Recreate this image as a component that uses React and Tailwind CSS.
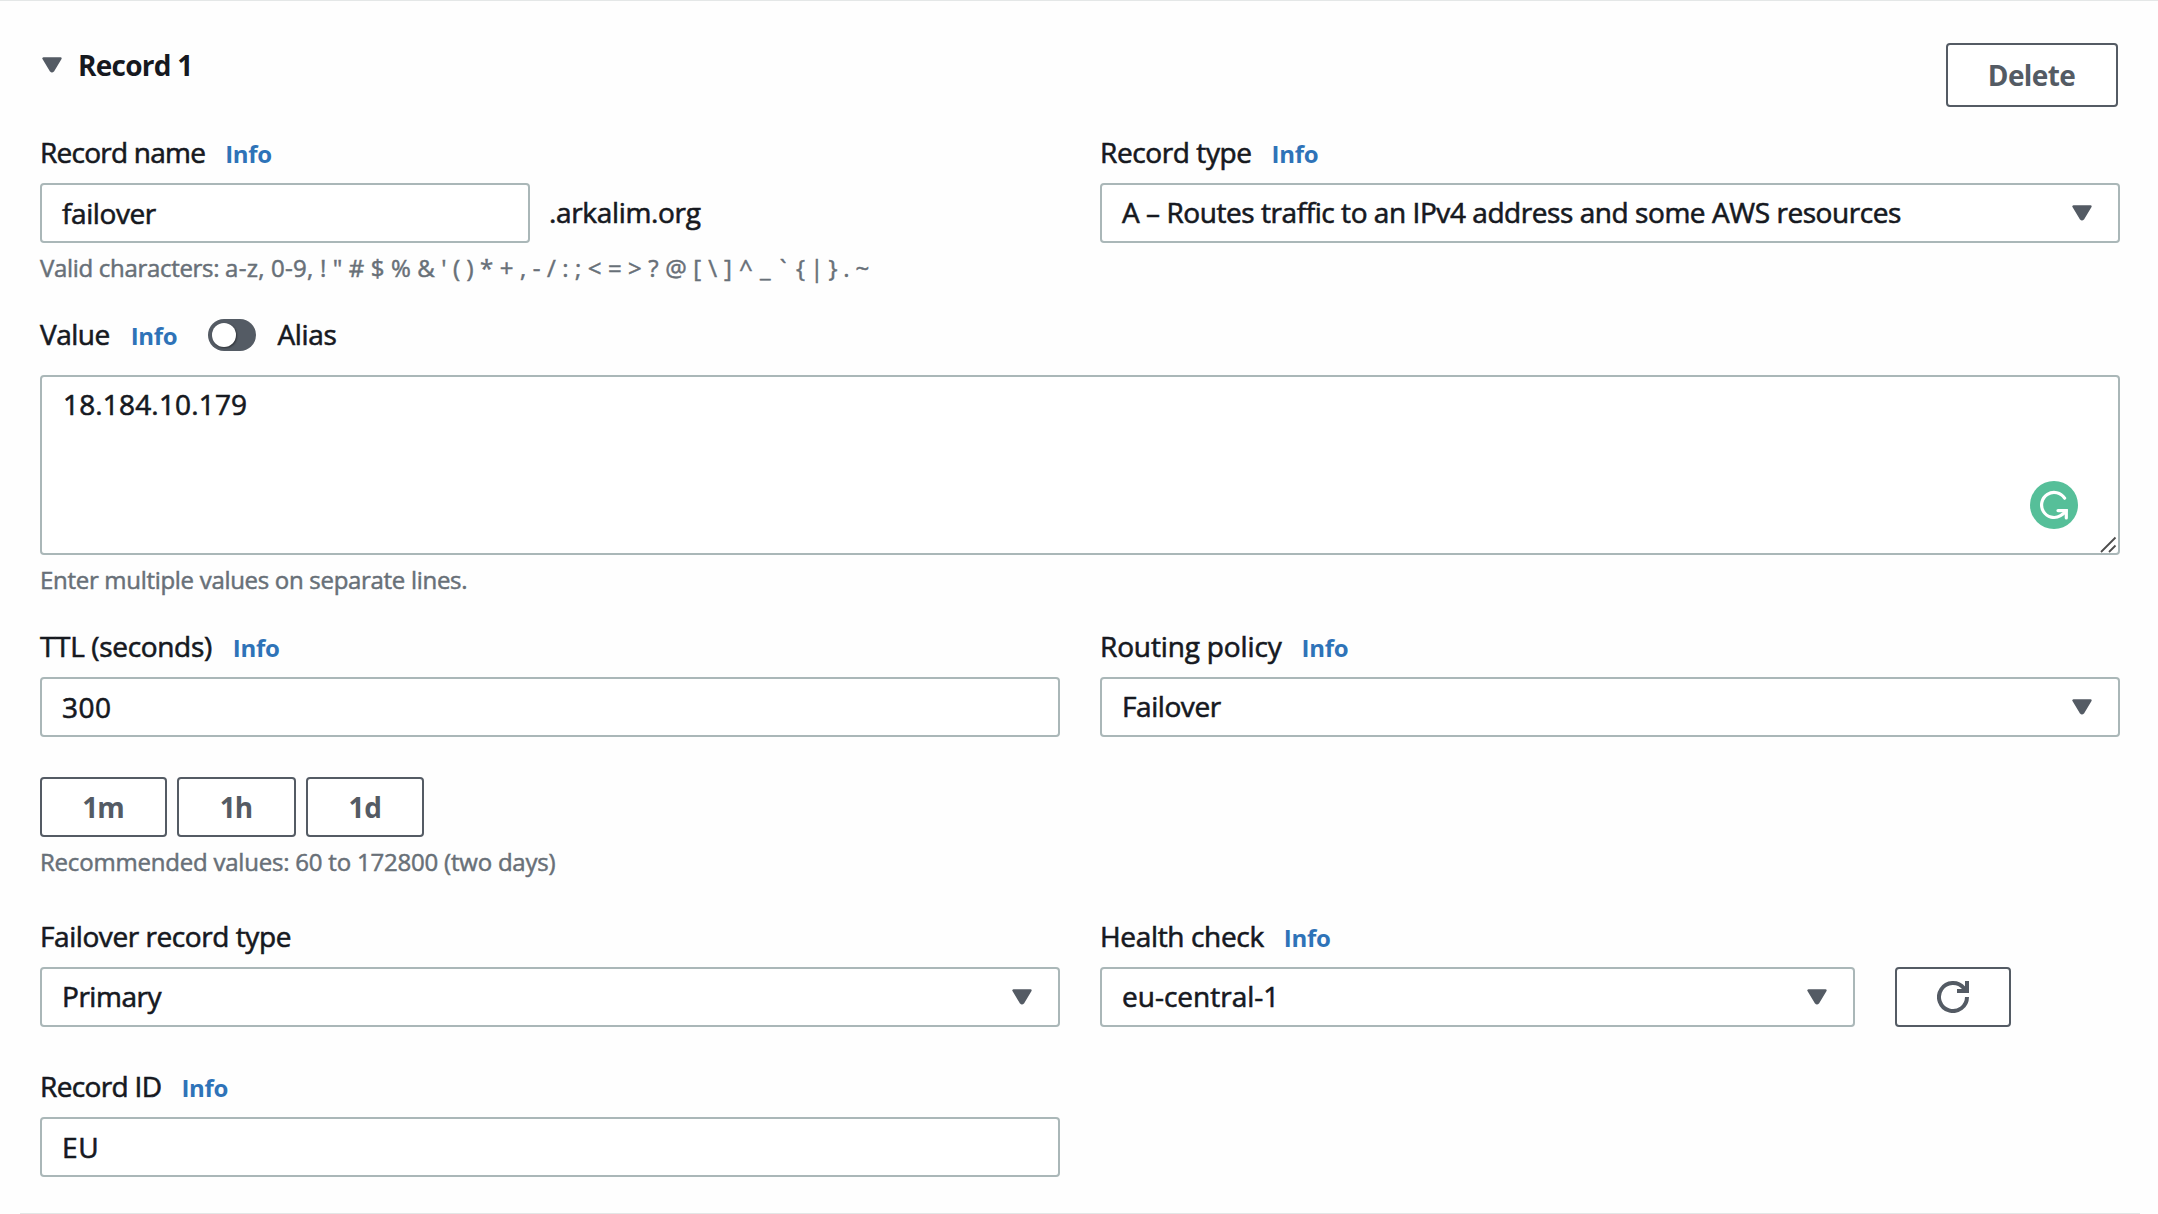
import React from 'react';

function Caret() {
  return (
    <svg width="20" height="16" viewBox="0 0 20 16" className="shrink-0" aria-hidden="true">
      <path d="M1.5 1.5H18.5L11 13.8Q10 15 9 13.8Z" fill="#545b64" stroke="#545b64" strokeWidth="2.4" strokeLinejoin="round" />
    </svg>
  );
}

function Label({ text, tracking, info, gap = 'gap-[20px]' }) {
  return (
    <div className={`flex h-10 items-baseline leading-10 ${gap}`}>
      <span className={`${tracking} [-webkit-text-stroke:0.6px]`}>{text}</span>
      {info && <a className="text-[24px] font-bold tracking-[-0.3px] text-[#2e73b8]">Info</a>}
    </div>
  );
}

function Input({ value, tracking, width = 'w-full' }) {
  return (
    <div className={`flex h-[60px] items-center rounded-[4px] border-2 border-[#aab7b8] bg-white pl-5 ${width}`}>
      <span className={`${tracking} leading-10 [-webkit-text-stroke:0.6px]`}>{value}</span>
    </div>
  );
}

function Select({ value, tracking, width = 'w-full' }) {
  return (
    <div className={`flex h-[60px] items-center justify-between rounded-[4px] border-2 border-[#aab7b8] bg-white pr-[26px] pl-5 ${width}`}>
      <span className={`${tracking} pb-0.5 leading-10 [-webkit-text-stroke:0.6px]`}>{value}</span>
      <Caret />
    </div>
  );
}

function Button({ children, className }) {
  return (
    <button className={`flex items-center justify-center rounded-[4px] border-2 border-[#545b64] bg-white font-bold text-[#545b64] ${className}`}>
      {children}
    </button>
  );
}

export default function App() {
  return (
    <div className="h-[1214px] w-[2158px] overflow-hidden border-t border-[#e4e7e7] bg-[#fefefe] font-['Open_Sans',sans-serif] text-[28px] text-[#16191f]">
      <div className="mr-[18px] ml-5 h-[1213px] border-b border-[#e4e6e6] pt-[42px] pr-5 pl-5">
        <div className="flex h-[89px] items-start justify-between pr-0.5">
          <div className="mt-0.5 flex items-center gap-4 pl-0.5 leading-10">
            <Caret />
            <h2 className="font-bold tracking-[-0.75px]">Record 1</h2>
          </div>
          <Button className="h-16 w-[172px] pr-px tracking-[-0.6px]">Delete</Button>
        </div>

        <div className="grid grid-cols-2 gap-x-10">
          <div>
            <Label text="Record name" tracking="tracking-[-0.76px]" info />
            <div className="mt-[11px] flex items-center gap-[19px]">
              <Input value="failover" tracking="tracking-[-0.4px]" width="w-[490px]" />
              <span className="pb-0.5 leading-10 tracking-[-0.33px] [-webkit-text-stroke:0.6px]">.arkalim.org</span>
            </div>
            <p className="mt-[9px] text-[24px] leading-8 whitespace-pre text-[#687078] [-webkit-text-stroke:0.5px]">
              <span className="tracking-[-0.31px]">Valid characters: </span>
              <span className="tracking-[0.25px]">a-z, 0-9, </span>
              <span className="tracking-[0.12px]">{"! \" # $ % & ' ( ) * + , - / : ; < = > ? @ "}</span>
              <span className="tracking-[0.45px]">{'[ \\ ] ^ '}</span>
              <span className="tracking-[1.6px]">{'_ ` '}</span>
              <span className="tracking-[-0.5px]">{'{ | }'}</span>
              <span className="tracking-[-0.1px]">{' . ~'}</span>
            </p>
          </div>
          <div>
            <Label text="Record type" tracking="tracking-[-0.4px]" info />
            <div className="mt-[11px]">
              <Select value="A – Routes traffic to an IPv4 address and some AWS resources" tracking="tracking-[-0.44px]" />
            </div>
          </div>
        </div>

        <div className="mt-[30px] flex items-center">
          <Label text="Value" tracking="tracking-[-0.5px]" info gap="gap-[21px]" />
          <span className="mt-0.5 ml-[31px] flex h-8 w-12 items-center rounded-full bg-[#545b64] pl-1">
            <span className="size-6 rounded-full bg-white shadow-[1px_1px_2px_rgba(0,0,0,0.45)]" />
          </span>
          <span className="ml-[21px] leading-10 tracking-[-0.3px] [-webkit-text-stroke:0.6px]">Alias</span>
        </div>
        <div className="relative mt-[21px] h-[180px] rounded-[4px] border-2 border-[#aab7b8] bg-white pt-[6px] pl-[21px]">
          <span className="leading-10 tracking-[0.16px] [-webkit-text-stroke:0.6px]">18.184.10.179</span>
          <svg className="absolute right-[40px] bottom-[24px]" width="48" height="48" viewBox="0 0 48 48" fill="none" stroke="#fff" strokeWidth="3.2" strokeLinejoin="miter">
            <circle cx="24" cy="24" r="24" fill="#56bf99" stroke="none" />
            <path d="M34.6 17.2A12.5 12.5 0 1 0 30.5 34.7Q33.6 33 36 30" strokeLinecap="round" />
            <path d="M28 29.6H36.3V37" strokeLinecap="round" />
          </svg>
          <svg className="absolute right-px bottom-0" width="17" height="17" viewBox="0 0 17 17" stroke="#4d4d4d" strokeWidth="1.8">
            <path d="M1 16L15.5 1.5M9 16L15.5 9.5" />
          </svg>
        </div>
        <p className="mt-[9px] text-[24px] leading-8 tracking-[-0.3px] text-[#687078] [-webkit-text-stroke:0.5px]">Enter multiple values on separate lines.</p>

        <div className="mt-[30px] grid grid-cols-2 gap-x-10">
          <div>
            <Label text="TTL (seconds)" tracking="tracking-[-0.34px]" info gap="gap-[21px]" />
            <div className="mt-[11px]">
              <Input value="300" tracking="tracking-[0.5px]" />
            </div>
            <div className="mt-10 flex gap-2.5">
              <Button className="h-[60px] w-[127px] pr-px pb-px tracking-[-1px]">1m</Button>
              <Button className="h-[60px] w-[119px] pr-px pb-px tracking-[-1px]">1h</Button>
              <Button className="h-[60px] w-[118px] pb-px tracking-[-0.4px]">1d</Button>
            </div>
            <p className="mt-[9px] text-[24px] leading-8 tracking-[-0.21px] text-[#687078] [-webkit-text-stroke:0.5px]">Recommended values: 60 to 172800 (two days)</p>
          </div>
          <div>
            <Label text="Routing policy" tracking="tracking-[-0.14px]" info />
            <div className="mt-[11px]">
              <Select value="Failover" tracking="tracking-[-0.43px]" />
            </div>
          </div>
        </div>

        <div className="mt-[38px] grid grid-cols-2 gap-x-10">
          <div>
            <Label text="Failover record type" tracking="tracking-[-0.43px]" />
            <div className="mt-[11px]">
              <Select value="Primary" tracking="tracking-[-0.46px]" />
            </div>
          </div>
          <div>
            <Label text="Health check" tracking="tracking-[-0.34px]" info />
            <div className="mt-[11px] flex gap-10">
              <Select value="eu-central-1" tracking="tracking-[0px]" width="w-[755px]" />
              <Button className="h-[60px] w-[116px]">
                <svg width="32" height="32" viewBox="0 0 32 32" fill="none" stroke="#545b64" strokeWidth="4">
                  <path d="M30 16A14 14 0 1 1 26.8 7.1L29 10" />
                  <path d="M30 0V10H20" />
                </svg>
              </Button>
            </div>
          </div>
        </div>

        <div className="mt-[39px] w-[1020px]">
          <Label text="Record ID" tracking="tracking-[-0.65px]" info />
          <div className="mt-[11px]">
            <Input value="EU" tracking="tracking-[0.8px]" />
          </div>
        </div>
      </div>
    </div>
  );
}
